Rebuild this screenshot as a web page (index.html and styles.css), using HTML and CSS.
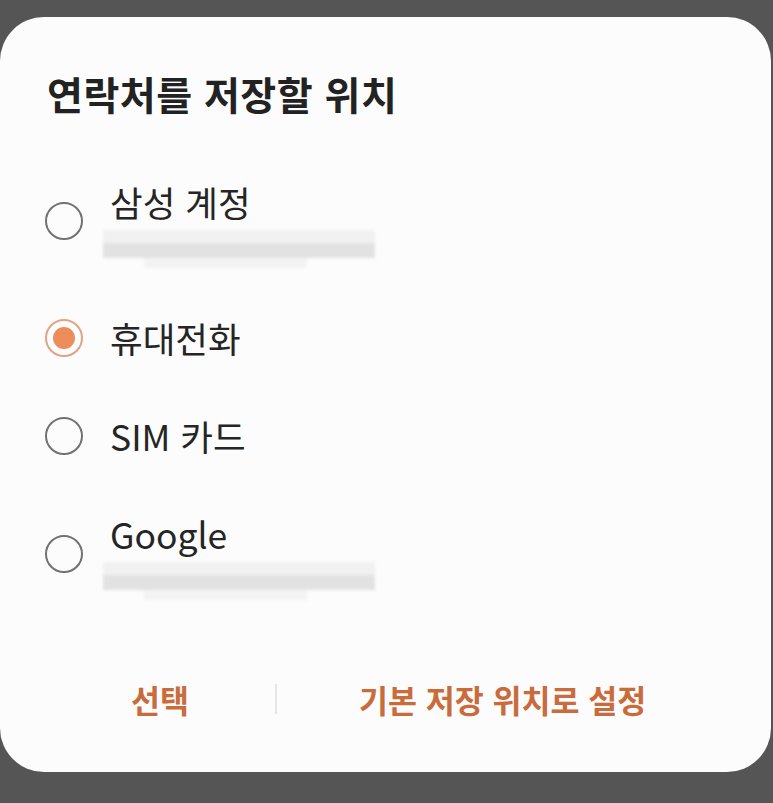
FILE: index.html
```html
<!DOCTYPE html>
<html lang="ko">
<head>
    <meta charset="UTF-8">
    <title>연락처를 저장할 위치</title>
    <link rel="stylesheet" href="styles.css">
</head>
<body>
    <div class="dialog">
        <h1 class="title">연락처를 저장할 위치</h1>
        <ul class="options">
            <li class="option two-line">
                <span class="radio"></span>
                <div class="label">
                    <div class="name">삼성 계정</div>
                    <div class="mask"><span></span><span></span><span></span></div>
                </div>
            </li>
            <li class="option">
                <span class="radio checked"></span>
                <div class="label"><div class="name">휴대전화</div></div>
            </li>
            <li class="option">
                <span class="radio"></span>
                <div class="label"><div class="name">SIM 카드</div></div>
            </li>
            <li class="option two-line last">
                <span class="radio"></span>
                <div class="label">
                    <div class="name">Google</div>
                    <div class="mask"><span></span><span></span><span></span></div>
                </div>
            </li>
        </ul>
        <div class="actions">
            <button class="action left">선택</button>
            <span class="divider"></span>
            <button class="action right">기본 저장 위치로 설정</button>
        </div>
    </div>
</body>
</html>
```

FILE: styles.css
```css
body {
    margin: 0;
    background: #555555;
    font-family: 'Noto Sans CJK KR', 'Noto Sans', sans-serif;
    width: 773px;
    height: 803px;
    overflow: hidden;
}
.dialog {
    margin-top: 17px;
    width: 771px;
    height: 755px;
    background: #fcfcfc;
    border-radius: 44px;
    box-sizing: border-box;
    padding: 54px 0 0 45px;
}
.title {
    margin: 0 0 0 2px;
    font-size: 39px;
    font-weight: 700;
    color: #222;
    line-height: 44px;
    letter-spacing: 0.5px;
}
.options {
    list-style: none;
    margin: 38px 0 0;
    padding: 0;
}
.option {
    display: flex;
    align-items: center;
    height: 98px;
}
.option.two-line {
    align-items: flex-start;
    height: 136px;
    padding-top: 28px;
    box-sizing: border-box;
}
.option.last {
    height: 138px;
}
.radio {
    width: 34px;
    height: 34px;
    border: 2px solid #727272;
    border-radius: 50%;
    flex-shrink: 0;
    display: flex;
    align-items: center;
    justify-content: center;
}
.two-line .radio {
    margin-top: 21px;
}
.last .radio {
    margin-top: 22px;
}
.radio.checked {
    border-color: #e0a484;
}
.radio.checked::after {
    content: '';
    width: 22px;
    height: 22px;
    border-radius: 50%;
    background: #ef8d5a;
}
.label {
    margin-left: 27px;
}
.name {
    font-size: 35.5px;
    color: #252525;
    line-height: 42px;
}
.mask {
    margin-top: 7px;
    width: 272px;
    display: flex;
    flex-direction: column;
    filter: blur(1.5px);
    margin-left: -7px;
}
.mask span {
    height: 13px;
    background: #f1f1f1;
}
.mask span:nth-child(2) {
    height: 15px;
    background: #e2e2e2;
}
.mask span:nth-child(3) {
    height: 10px;
    width: 60%;
    margin-left: 15%;
    background: #f3f3f3;
}
.actions {
    display: flex;
    align-items: center;
    margin: 56px 0 0 -45px;
    height: 40px;
}
.action {
    background: none;
    border: none;
    padding: 0;
    font-family: inherit;
    font-size: 31.5px;
    line-height: 40px;
    font-weight: 700;
    color: #c96b3b;
    cursor: pointer;
}
.action.left {
    margin-left: 131px;
}
.divider {
    width: 2px;
    height: 30px;
    background: #e6e6e6;
    margin: 0 82px 0 86px;
}
```
